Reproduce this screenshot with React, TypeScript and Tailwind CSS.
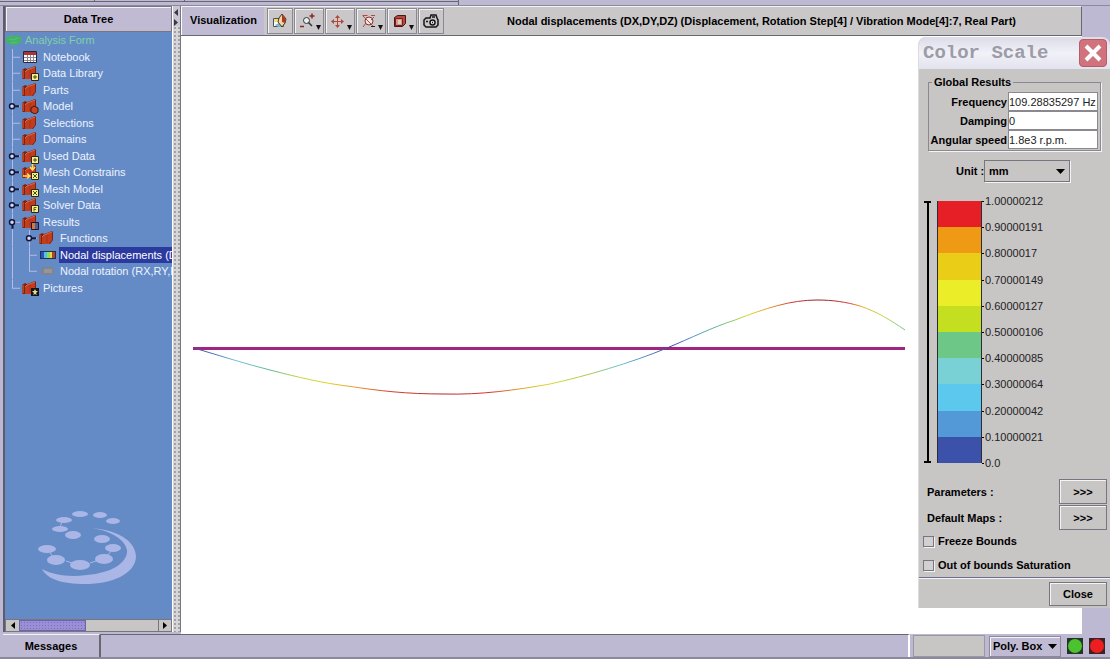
import type { ReactNode } from "react";
import { clsx } from "clsx";

const raised = "border border-[#77757f] shadow-[inset_1px_1px_0_#f4f3f6]";

type Badge = "plus" | "part" | "mesh" | "arrows" | "solver" | "result" | "picture";
type Handle = "closed" | "open" | "line" | "last";

type TreeRow = {
  label: string;
  icon: "folder" | "table" | "map" | "mapOff";
  badge?: Badge;
  handle: Handle;
  depth?: number;
  selected?: boolean;
};

const rows: TreeRow[] = [
  { label: "Notebook", icon: "table", handle: "line" },
  { label: "Data Library", icon: "folder", badge: "plus", handle: "line" },
  { label: "Parts", icon: "folder", handle: "line" },
  { label: "Model", icon: "folder", badge: "part", handle: "closed" },
  { label: "Selections", icon: "folder", handle: "line" },
  { label: "Domains", icon: "folder", handle: "line" },
  { label: "Used Data", icon: "folder", badge: "plus", handle: "closed" },
  { label: "Mesh Constrains", icon: "folder", badge: "arrows", handle: "closed" },
  { label: "Mesh Model", icon: "folder", badge: "mesh", handle: "closed" },
  { label: "Solver Data", icon: "folder", badge: "solver", handle: "closed" },
  { label: "Results", icon: "folder", badge: "result", handle: "open" },
  { label: "Functions", icon: "folder", handle: "closed", depth: 1 },
  { label: "Nodal displacements (D", icon: "map", handle: "line", depth: 1, selected: true },
  { label: "Nodal rotation (RX,RY,R", icon: "mapOff", handle: "last", depth: 1 },
  { label: "Pictures", icon: "folder", badge: "picture", handle: "last" },
];

const scale = [
  { color: "bg-[#e51f25]", label: "1.00000212" },
  { color: "bg-[#ee9a14]", label: "0.90000191" },
  { color: "bg-[#e9cd17]", label: "0.8000017" },
  { color: "bg-[#ebed29]", label: "0.70000149" },
  { color: "bg-[#c3df20]", label: "0.60000127" },
  { color: "bg-[#6dc888]", label: "0.50000106" },
  { color: "bg-[#79d0d5]", label: "0.40000085" },
  { color: "bg-[#5cc8ee]", label: "0.30000064" },
  { color: "bg-[#5399d7]", label: "0.20000042" },
  { color: "bg-[#3c51aa]", label: "0.10000021" },
];

function Gutter({ kind }: { kind: Handle | "pass" }) {
  const knob = kind === "closed" || kind === "open";
  return (
    <svg className="h-full w-[17px] shrink-0" aria-hidden="true">
      <line x1="7.5" y1="0" x2="7.5" y2={kind === "last" ? "50%" : "100%"} stroke="#b4bbe6" />
      {kind !== "pass" && <line x1="7" y1="50%" x2="15" y2="50%" stroke="#b4bbe6" />}
      {knob && (
        <>
          {kind === "closed" ? (
            <line x1="9" y1="50%" x2="14" y2="50%" stroke="#15183a" strokeWidth="2" />
          ) : (
            <line x1="7.5" y1="50%" x2="7.5" y2="90%" stroke="#15183a" strokeWidth="2" />
          )}
          <circle cx="7" cy="50%" r="2.5" fill="#d5d8f6" stroke="#15183a" strokeWidth="1.5" />
        </>
      )}
    </svg>
  );
}

function BadgeShape({ badge }: { badge: Badge }) {
  if (badge === "part") {
    return <path d="M9 10l3-2 4 2v4l-3 2-4-2z" fill="#c8431d" stroke="#401410" />;
  }
  if (badge === "picture") {
    return (
      <>
        <path d="M9 8h8v8H9z" fill="#141414" />
        <path d="M13 9l1 2h2l-2 2 1 2-2-1-2 1 1-2-2-2h2z" fill="#e6dc9a" />
      </>
    );
  }
  if (badge === "result") {
    return (
      <>
        <path d="M9.500 8.500h7v7h-7z" fill="#4d5f9b" stroke="#181830" />
        <path d="M10 9h3v6h-3z" fill="#d8763c" />
      </>
    );
  }
  return (
    <>
      {badge === "arrows" && (
        <path d="M10.500 0v6M8 3l2.500 3L13 3M1 12h6M5 9.500L8 12l-3 2.500" fill="none" stroke="#ffdc62" strokeWidth="1.500" />
      )}
      <path d="M9.500 8.500h7v7h-7z" fill="#f7ef8d" stroke="#2b2812" />
      {badge === "plus" && <path d="M13 10v4M11 12h4" stroke="#4a431a" />}
      {badge === "solver" && <path d="M14.500 10.500H12v4M12 12.500h2" fill="none" stroke="#6b5d12" />}
      {(badge === "mesh" || badge === "arrows") && (
        <path d="M11 10l4 4M15 10l-4 4" fill="none" stroke="#4f4a1a" />
      )}
    </>
  );
}

function RowIcon({ icon, badge }: { icon: TreeRow["icon"]; badge?: Badge }) {
  return (
    <svg viewBox="0 0 18 16" className="h-4 w-[18px] shrink-0" aria-hidden="true">
      {icon === "folder" && (
        <>
          <path d="M0 5l3-2 2 1 3-1 5-2 1 1v8l-3 4H1L0 13z" fill="#7c2318" />
          <path d="M3 7l2-2 8-3v8l-3 4H3z" fill="#c23c1d" />
          <path d="M3 7l2-2 8-3M1 5v8" fill="none" stroke="#dc6a45" />
          <path d="M8 5v8" stroke="#a5321b" />
        </>
      )}
      {icon === "table" && (
        <>
          <path d="M1.500 2.500h13v11h-13z" fill="#fff" stroke="#30243a" />
          <path d="M2 3h12v3H2z" fill="#a8352f" />
          <path d="M2 8.500h12M2 11.500h12M5.500 6v7M8.500 6v7M11.500 6v7" stroke="#8d8791" />
        </>
      )}
      {icon === "map" && (
        <>
          <path d="M1 4h16v8H1z" fill="#22304e" />
          <path d="M2 5h3v6H2z" fill="#2a52c0" />
          <path d="M5 5h3v6H5z" fill="#4cc3e6" />
          <path d="M8 5h3v6H8z" fill="#8fd95a" />
          <path d="M11 5h2v6h-2z" fill="#f1d73a" />
          <path d="M13 5h3v6h-3z" fill="#a7482d" />
        </>
      )}
      {icon === "mapOff" && (
        <>
          <path d="M2 4h13v8H2z" fill="#7b8599" />
          <path d="M5 6h8v4H5z" fill="#9b958f" />
        </>
      )}
      {badge && <BadgeShape badge={badge} />}
    </svg>
  );
}

function DataTree() {
  return (
    <ul className="grid h-[264px] auto-rows-fr text-[11px] leading-4 text-[#eef2ff]">
      <li className="flex min-h-0 items-center">
        <svg viewBox="0 0 18 14" className="h-[14px] w-[18px] shrink-0" aria-hidden="true">
          <path d="M1 5q4-4 8-2 4-2 7 1 2 3-1 6-6 4-11 1-4-2-3-6z" fill="#45b26b" />
          <path d="M4 6l4 1 5-2M6 10l6-1" stroke="#58bf7c" fill="none" />
        </svg>
        <button className="ml-[2px] text-[#7fd0a6]">Analysis Form</button>
      </li>
      {rows.map((row) => (
        <li key={row.label} className="flex min-h-0 min-w-0 items-center">
          {row.depth && <Gutter kind="pass" />}
          <Gutter kind={row.handle} />
          <RowIcon icon={row.icon} badge={row.badge} />
          <button
            className={clsx(
              "ml-[2px] h-full flex-1 whitespace-nowrap px-px text-left",
              row.selected && "bg-[#2b3a9e] text-white"
            )}
          >
            {row.label}
          </button>
        </li>
      ))}
    </ul>
  );
}

function Watermark() {
  return (
    <svg viewBox="0 0 98 76" className="mb-8 ml-[33px] mt-auto h-[76px] w-[98px] shrink-0" fill="#aab6e6" aria-hidden="true">
      <ellipse cx="42" cy="3" rx="8" ry="3" />
      <ellipse cx="62" cy="4" rx="7" ry="3" />
      <ellipse cx="26" cy="9" rx="8" ry="3" />
      <ellipse cx="75" cy="10" rx="7" ry="3" />
      <ellipse cx="22" cy="18" rx="8" ry="3" />
      <ellipse cx="35" cy="24" rx="8" ry="4" />
      <ellipse cx="64" cy="28" rx="8" ry="4" />
      <ellipse cx="9" cy="38" rx="9" ry="4" />
      <ellipse cx="75" cy="37" rx="8" ry="4" />
      <ellipse cx="18" cy="49" rx="9" ry="5" />
      <ellipse cx="66" cy="48" rx="9" ry="5" />
      <ellipse cx="42" cy="54" rx="10" ry="5" />
      <path d="M11 40l4 6M70 44l4-5M28 50l6 2M52 52l6-2M24 11l-2 5" stroke="#aab6e6" />
      <path d="M54 17C84 20 98 32 98 46 97 63 74 73 47 73 24 73 9 68 4 58 17 65 33 66 49 64 73 62 90 52 89 39 87 29 74 20 54 17z" />
    </svg>
  );
}

function Sidebar() {
  return (
    <aside className="flex w-[169px] shrink-0 flex-col border-l-2 border-[#5d5b6e]">
      <h2 className={clsx(raised, "h-[26px] shrink-0 bg-[#c0bbd3] text-center text-[11px] font-bold leading-6")}>Data Tree</h2>
      <div className="flex min-h-0 flex-1 flex-col overflow-hidden bg-[#648bc6]">
        <DataTree />
        <Watermark />
      </div>
      <div className="flex h-[13px] shrink-0 border border-[#77757f] bg-[#c8c5c5]">
        <button aria-label="Scroll left" className="flex w-[13px] items-center justify-center">
          <svg viewBox="0 0 4 7" className="h-[7px] w-1"><path d="M4 0v7L0 3.500z" /></svg>
        </button>
        <div className="w-[67px] border border-[#6b65ae] bg-[#9a8fd4] bg-[radial-gradient(#786fc0_1px,transparent_1px)] bg-[size:3px_3px]" />
        <button aria-label="Scroll right" className="ml-auto flex w-[13px] items-center justify-center border-l border-[#77757f]">
          <svg viewBox="0 0 4 7" className="h-[7px] w-1"><path d="M0 0v7l4-3.500z" /></svg>
        </button>
      </div>
    </aside>
  );
}

function Splitter() {
  return (
    <div className="w-[9px] shrink-0 border-x border-l-white border-r-[#77757f] bg-[#d6d5d7] bg-[radial-gradient(#a3a1a6_1px,transparent_1px)] bg-[size:4px_4px]">
      <svg viewBox="0 0 7 20" className="h-5 w-[7px]" aria-hidden="true">
        <path d="M0 0h7v20H0z" fill="#c8c6d2" />
        <path d="M5 3v7L1 6.500zM1 13v7l4-3.500z" fill="#3a3846" />
      </svg>
    </div>
  );
}

function ToolButton({ label, menu, children }: { label: string; menu?: boolean; children: ReactNode }) {
  return (
    <button
      aria-label={label}
      className={clsx(
        "mr-px h-[26px] border border-[#8b898f] bg-[#c9c7c9] shadow-[inset_1px_1px_0_#f4f3f6]",
        menu ? "w-[30px]" : "w-[26px]"
      )}
    >
      <svg viewBox={menu ? "0 0 28 24" : "0 0 24 24"} className="h-6 w-full" fill="none">
        {children}
        {menu && <path d="M21 16h5l-2.500 5z" fill="#111" />}
      </svg>
    </button>
  );
}

function Toolbar() {
  return (
    <div className="flex h-[30px] shrink-0 items-center border-b border-[#68666f] border-t-[#f4f3f6] border-t border-r border-r-[#68666f] bg-[#c9c7c7] pr-[3px]">
      <h1 className="mr-[3px] h-7 w-[83px] shrink-0 border-l border-white bg-[#c0bbd3] pl-2 text-[11px] font-bold leading-[27px]">
        Visualization
      </h1>
      <ToolButton label="Appearance">
        <path d="M5.500 9.500h10v8h-10z" fill="#fff" stroke="#4a5262" />
        <path d="M6 10h4v3H6z" fill="#efe175" />
        <path d="M7 16l3 2h5l-4-4z" fill="#75b9cf" />
        <path d="M14 5l4 5-1 4-3 4-4-5 1-4z" fill="#f4d5a3" stroke="#4a2e1c" />
        <path d="M14 5l4 5-1 4-3-1z" fill="#a73e23" />
      </ToolButton>
      <ToolButton label="Zoom" menu>
        <circle cx="11.500" cy="11.500" r="3" fill="#e8efef" stroke="#333" />
        <path d="M13.500 13.500l3.500 3.500" stroke="#333" strokeWidth="1.500" />
        <path d="M14.500 7h5M17 4.500v5M5 17.500h4" stroke="#8a2a24" strokeWidth="1.500" />
      </ToolButton>
      <ToolButton label="Pan" menu>
        <path d="M11.500 9v7M8 12.500h7" stroke="#b0483c" />
        <path d="M9 9l2.500-3L14 9zM9 16l2.500 3 2.500-3zM8 10l-3 2.500L8 15zM15 10l3 2.500-3 2.500z" fill="#b0483c" />
        <path d="M10 11h3v3h-3z" fill="#e9c8c2" />
        <path d="M11.500 10v5M9 12.500h5" stroke="#b0483c" />
      </ToolButton>
      <ToolButton label="Rotate" menu>
        <circle cx="12" cy="12" r="4" fill="#ece6e6" stroke="#922f27" />
        <path d="M6 7l10 10M5.500 6.500h5M14 6.500h4M6 18l3-4M17 8l-3 3" stroke="#b0483c" />
        <path d="M14 17.500h4" stroke="#222" />
      </ToolButton>
      <ToolButton label="View" menu>
        <path d="M6.500 8.500l3-2h8v8l-3 3h-8z" fill="#b5473f" stroke="#4a1512" />
        <path d="M7.500 9.500h7v7h-7z" fill="#d98f86" stroke="#7a201b" />
        <path d="M10 11h3v4h-3z" fill="#d9cccb" />
      </ToolButton>
      <ToolButton label="Snapshot">
        <path d="M5 11l2-2h4l1-3h5l1 3 1 2v5l-2 2H7l-2-2z" fill="#c9c7c7" stroke="#161616" strokeWidth="1.500" />
        <circle cx="13.500" cy="13.500" r="2.500" fill="#eee" stroke="#161616" strokeWidth="1.500" />
        <path d="M7 12.500h2M13 13.500h1M13 8h3" stroke="#161616" strokeWidth="1.500" />
      </ToolButton>
      <p className="min-w-0 flex-1 truncate text-center text-[11px] font-bold">
        Nodal displacements (DX,DY,DZ) (Displacement, Rotation Step[4] / Vibration Mode[4]:7, Real Part)
      </p>
    </div>
  );
}

// offsets run along the beam, from x = 12 to x = 724
const curveStops = [
  [0, "#5a3f9e"],
  [0.03, "#4a6fb8"],
  [0.06, "#6cc3e0"],
  [0.11, "#62b98a"],
  [0.15, "#c6d63c"],
  [0.19, "#e3cf2b"],
  [0.23, "#e39a2b"],
  [0.27, "#d8452f"],
  [0.35, "#b3272b"],
  [0.42, "#d33a2c"],
  [0.46, "#e3a02c"],
  [0.5, "#dcd832"],
  [0.56, "#a2c850"],
  [0.6, "#69c5cf"],
  [0.64, "#4f83c8"],
  [0.67, "#3f3f9c"],
  [0.7, "#4f8fd0"],
  [0.74, "#62bd8f"],
  [0.78, "#d5d832"],
  [0.81, "#e29a2b"],
  [0.84, "#d33a2c"],
  [0.88, "#8f2026"],
  [0.92, "#d33a2c"],
  [0.94, "#e3b02c"],
  [0.97, "#c6d63c"],
  [1, "#6cc0a0"],
] as const;

function Viewport() {
  return (
    <svg
      viewBox="0 0 901 598"
      preserveAspectRatio="xMinYMid meet"
      className="min-h-0 w-full flex-1 bg-white"
      role="img"
      aria-label="Mode shape"
    >
      <defs>
        <linearGradient id="mode" gradientUnits="userSpaceOnUse" x1="12" y1="0" x2="724" y2="0">
          {curveStops.map(([offset, color]) => (
            <stop key={offset} offset={offset} stopColor={color} />
          ))}
        </linearGradient>
      </defs>
      <path d="M12 312.500h712" stroke="#a3247f" strokeWidth="3" />
      <path
        d="M13 312C40 320 65 328 89 334 120 342 142 347 166 350 200 355 225 358 263 358 300 359 335 354 369 348 405 340 450 327 486 312 510 302 532 291 554 284 585 272 610 264 636 264 652 264 665 266 679 270 697 276 709 284 724 294"
        fill="none"
        stroke="url(#mode)"
      />
    </svg>
  );
}

function ResultField({ label, value }: { label: string; value: string }) {
  return (
    <label className="flex h-[19px] items-center justify-end gap-px">
      {label}
      <input
        defaultValue={value}
        className="h-[19px] w-[90px] border border-[#8b898f] bg-white text-[11px] font-normal text-[#222]"
      />
    </label>
  );
}

function ColorScaleDialog() {
  return (
    <section
      role="dialog"
      aria-labelledby="scale-title"
      className="absolute right-0 top-[37px] flex w-[192px] flex-col rounded-t-lg border-l border-[#dddbe2] bg-[#c8c5c5] text-[11px] font-bold leading-4"
    >
      <header className="flex h-8 items-center justify-between rounded-t-lg bg-linear-to-b from-[#dcdcea] via-[#f1f1f8] to-[#e3e3ef] pl-1 pr-[3px]">
        <h2 id="scale-title" className="font-['Liberation_Mono',monospace] text-[19px] text-[#9c9ca6]">
          Color Scale
        </h2>
        <button aria-label="Close window" className="flex h-7 w-7 items-center justify-center rounded border border-[#b95a66] bg-[#d0737c]">
          <svg viewBox="0 0 18 18" className="h-[18px] w-[18px]">
            <path d="M2 2l14 14M16 2L2 16" stroke="#fff" strokeWidth="4" />
          </svg>
        </button>
      </header>

      <fieldset className="mx-[9px] mt-[5px] border border-[#8b898f] pb-[1px] pr-[2px] shadow-[1px_1px_0_#f4f3f6]">
        <legend className="ml-[3px] px-[2px]">Global Results</legend>
        <div className="mt-[2px]">
          <ResultField label="Frequency" value="109.28835297 Hz" />
          <ResultField label="Damping" value="0" />
          <ResultField label="Angular speed" value="1.8e3 r.p.m." />
        </div>
      </fieldset>

      <div className="mt-[9px] flex items-center pl-[37px]">
        <label htmlFor="unit" className="w-[28px] whitespace-nowrap">Unit :</label>
        <div className="grid items-center">
          <select id="unit" className="col-start-1 row-start-1 h-[22px] w-[86px] appearance-none border border-[#77757f] bg-[#c8c5c5] pl-1 font-bold shadow-[1px_1px_0_#f4f3f6]">
            <option>mm</option>
          </select>
          <svg viewBox="0 0 9 5" className="pointer-events-none col-start-1 row-start-1 mr-[5px] h-[5px] w-[9px] justify-self-end">
            <path d="M0 0h9L4.500 5z" />
          </svg>
        </div>
      </div>

      <div className="mt-[19px] flex h-[262px] pl-[5px] font-normal text-[#222]">
        <div className="flex w-[7px] flex-col items-center border-y-2 border-black">
          <div className="w-[2px] flex-1 bg-black" />
        </div>
        <div className="ml-[6px] flex w-[45px] flex-col border-x border-[#2c2c34]">
          {scale.map((band) => (
            <div key={band.label} className={clsx("flex-1", band.color)} />
          ))}
        </div>
        <div className="flex flex-col">
          {scale.map((band) => (
            <div key={band.label} className="flex h-0 flex-1 items-start">
              <span className="mr-[1px] h-px w-[2px] bg-black" />
              <span className="-mt-2">{band.label}</span>
            </div>
          ))}
          <div className="flex h-0 items-start">
            <span className="mr-[1px] h-px w-[2px] bg-black" />
            <span className="-mt-2">0.0</span>
          </div>
        </div>
      </div>

      <div className="mt-4 flex flex-col gap-px pl-2 pr-[3px]">
        <div className="flex items-center justify-between">
          Parameters :
          <button aria-label="Parameters" className={clsx(raised, "h-[25px] w-12")}>&gt;&gt;&gt;</button>
        </div>
        <div className="flex items-center justify-between">
          Default Maps :
          <button aria-label="Default Maps" className={clsx(raised, "h-[25px] w-12")}>&gt;&gt;&gt;</button>
        </div>
      </div>

      <div className="mt-[3px] flex flex-col gap-2 pb-1 pl-1">
        {["Freeze Bounds", "Out of bounds Saturation"].map((text) => (
          <label key={text} className="flex items-center gap-1">
            <input type="checkbox" className="h-[11px] w-[11px] appearance-none border border-[#77757f] bg-[#d2d0d0] shadow-[1px_1px_0_#f4f3f6]" />
            {text}
          </label>
        ))}
      </div>

      <footer className="flex justify-end border-t border-[#6e6c8c] pb-[2px] pr-[3px] pt-1 shadow-[inset_0_1px_0_#f4f3f6]">
        <button className={clsx(raised, "h-[24px] w-[58px]")}>Close</button>
      </footer>
    </section>
  );
}

function StatusBar() {
  return (
    <footer className="flex h-[25px] shrink-0 items-stretch border-b-2 border-[#8b899b] pl-[3px] text-[11px] font-bold">
      <button className="w-[97px] border-r border-[#68666f] border-t border-t-[#f4f3f6]">Messages</button>
      <div className="flex-1 border-t border-l border-r-2 border-[#68666f] border-r-white" />
      <div className="ml-[3px] mt-px w-[72px] border border-[#9a98a0] bg-[#c8c5c5]" />
      <div className="ml-1 mt-px grid items-center">
        <select aria-label="Selection mode" className="col-start-1 row-start-1 h-[21px] w-[72px] appearance-none border border-[#8b899b] bg-[#c0bbd3] pl-[3px] font-bold shadow-[inset_1px_1px_0_#f4f3f6]">
          <option>Poly. Box</option>
        </select>
        <svg viewBox="0 0 9 5" className="pointer-events-none col-start-1 row-start-1 mr-1 h-[5px] w-[9px] justify-self-end">
          <path d="M0 0h9L4.500 5z" />
        </svg>
      </div>
      <div className="ml-[6px] mr-[5px] flex items-center gap-[6px]">
        <div className="h-4 w-4 bg-[#26332a] p-px">
          <div className="h-full rounded-full bg-[#4bc32f]" />
        </div>
        <div className="h-4 w-4 bg-[#3a2226] p-px">
          <div className="h-full rounded-full bg-[#ee1d20]" />
        </div>
      </div>
    </footer>
  );
}

export default function App() {
  return (
    <div className="relative flex h-screen flex-col overflow-hidden bg-[#bdb9d2] font-['Liberation_Sans',Arial,sans-serif] text-black">
      <div className="flex h-[5px] shrink-0 items-start">
        <div className="h-[2px] w-[95px] border-b border-r border-[#68666f]" />
        <div className="h-[2px] w-[90px] border-b border-r border-[#68666f]" />
        <div className="h-[2px] w-[273px] border-b border-[#68666f]" />
        <div className="h-full border-l border-[#68666f]" />
      </div>
      <div className="flex min-h-0 flex-1 border-t border-[#8b899b]">
        <div className="flex min-w-0 flex-1 pl-[3px]">
          <div className="flex shrink-0 pb-[2px]">
            <Sidebar />
            <Splitter />
          </div>
          <main className="flex min-w-0 flex-1 flex-col">
            <Toolbar />
            <Viewport />
          </main>
        </div>
        <div className="w-7 shrink-0" />
      </div>
      <StatusBar />
      <ColorScaleDialog />
    </div>
  );
}
